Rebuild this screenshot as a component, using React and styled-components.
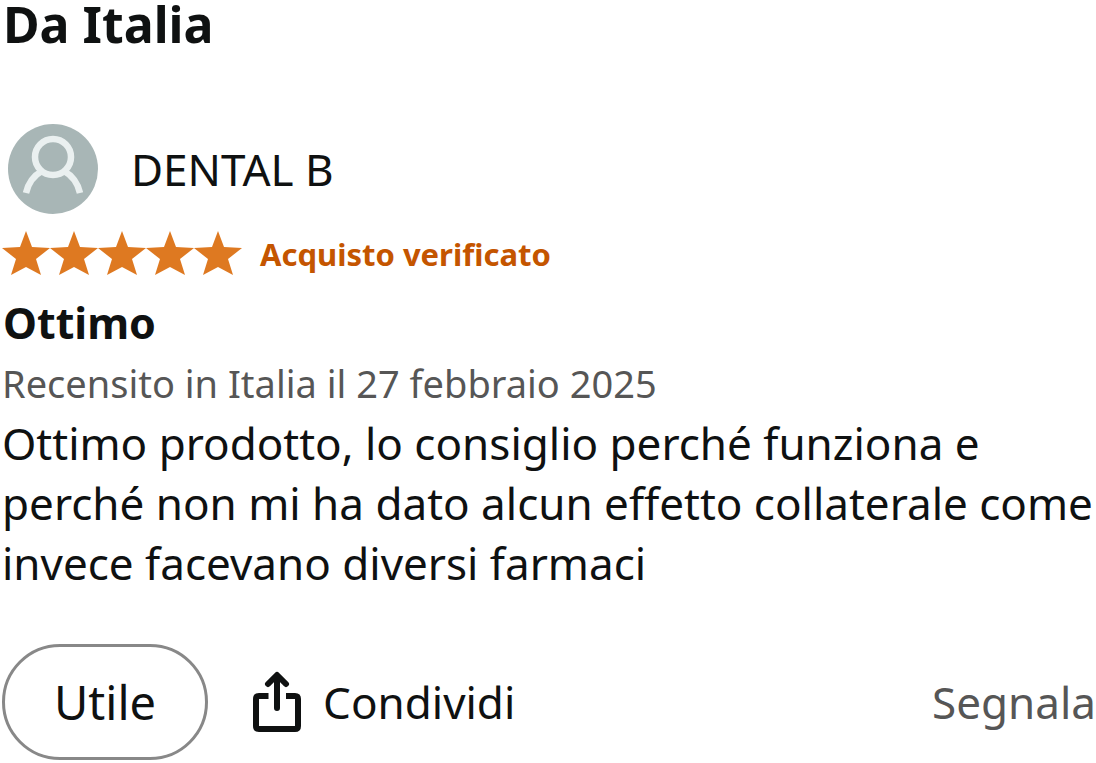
import React from 'react';
import styled, { createGlobalStyle } from 'styled-components';

const GlobalStyle = createGlobalStyle`
  body {
    margin: 0;
    background: #fff;
    color: #0f1111;
    font-family: 'Noto Sans', 'Open Sans', sans-serif;
  }

  * {
    box-sizing: border-box;
  }
`;

const Page = styled.main`
  display: flex;
  flex-direction: column;
`;

const RegionTitle = styled.h1`
  margin: 0 0 76px;
  padding-left: 3px;
  font-size: 50px;
  line-height: 48px;
  font-weight: 700;
`;

const Profile = styled.a`
  display: flex;
  align-items: center;
  gap: 33px;
  padding-left: 8px;
  color: inherit;
  font-size: 44px;
  line-height: 60px;
  text-decoration: none;
`;

const Avatar = styled.svg`
  width: 90px;
  height: 90px;
  flex: none;
`;

const RatingRow = styled.div`
  display: flex;
  align-items: center;
  gap: 18px;
  height: 79px;
`;

const Stars = styled.svg`
  width: 242px;
  height: 46px;
  flex: none;
`;

const Verified = styled.span`
  color: #c45500;
  font-size: 31px;
  line-height: 40px;
  font-weight: 700;
`;

const ReviewTitle = styled.h2`
  margin: 0;
  padding-left: 3px;
  font-size: 43px;
  line-height: 60px;
  font-weight: 700;
`;

const ReviewDate = styled.p`
  margin: 0;
  padding-left: 2px;
  color: #565656;
  font-size: 38px;
  line-height: 60px;
`;

const ReviewBody = styled.p`
  margin: 0;
  padding-left: 2px;
  font-size: 44px;
  line-height: 60px;
`;

const Actions = styled.div`
  display: flex;
  align-items: center;
  margin-top: 51px;
  padding-left: 2px;
`;

const Button = styled.button`
  display: flex;
  align-items: center;
  padding: 0;
  border: 0;
  background: none;
  color: ${({ $muted }) => ($muted ? '#565656' : '#0f1111')};
  font: inherit;
  font-size: 44px;
  line-height: 60px;
  cursor: pointer;
`;

const HelpfulButton = styled(Button)`
  padding: 25px 49px;
  border: 3px solid #888;
  border-radius: 58px;
  font-size: 47px;
`;

const ShareButton = styled(Button)`
  gap: 21px;
  margin-left: 45px;
`;

const ReportButton = styled(Button)`
  margin-left: auto;
`;

const ShareIcon = styled.svg`
  width: 49px;
  height: 62px;
`;

const App = () => {
  const stars = [0, 1, 2, 3, 4];

  return (
    <>
      <GlobalStyle />
      <Page>
        <RegionTitle>Da Italia</RegionTitle>
        <Profile href="#profile">
          <Avatar viewBox="0 0 90 90" aria-hidden="true">
            <circle cx="45" cy="45" r="45" fill="#a8b6b6" />
            <g fill="none" stroke="#eaf0f0" strokeWidth="6.5">
              <circle cx="45" cy="33" r="18" />
              <path d="M18 69C20 60 25 52 34 47M56 47C65 52 70 60 72 69" />
            </g>
          </Avatar>
          <span>DENTAL B</span>
        </Profile>
        <RatingRow>
          <Stars viewBox="0 0 242 46" role="img" aria-label="5 su 5 stelle">
            {stars.map((star) => (
              <path
                key={star}
                transform={`translate(${star * 48} 0)`}
                d="M26 0L32 16L50 17L36 28L41 44L26 36L11 44L16 28L2 17L20 16Z"
                fill="#de7921"
              />
            ))}
          </Stars>
          <Verified>Acquisto verificato</Verified>
        </RatingRow>
        <ReviewTitle>Ottimo</ReviewTitle>
        <ReviewDate>Recensito in Italia il 27 febbraio 2025</ReviewDate>
        <ReviewBody>
          Ottimo prodotto, lo consiglio perché funziona e perché non mi ha dato
          alcun effetto collaterale come invece facevano diversi farmaci
        </ReviewBody>
        <Actions>
          <HelpfulButton type="button">Utile</HelpfulButton>
          <ShareButton type="button">
            <ShareIcon viewBox="0 0 49 62" aria-hidden="true">
              <g fill="none" stroke="#0f1111" strokeWidth="6">
                <path d="M15.500 25H6Q3 25 3 28V55Q3 58 6 58H42Q45 58 45 55V28Q45 25 42 25H33" />
                <path
                  d="M24 37V5M15 13L24 4L33 13"
                  strokeLinecap="round"
                  strokeLinejoin="round"
                />
              </g>
            </ShareIcon>
            Condividi
          </ShareButton>
          <ReportButton type="button" $muted>Segnala</ReportButton>
        </Actions>
      </Page>
    </>
  );
};

export default App;
